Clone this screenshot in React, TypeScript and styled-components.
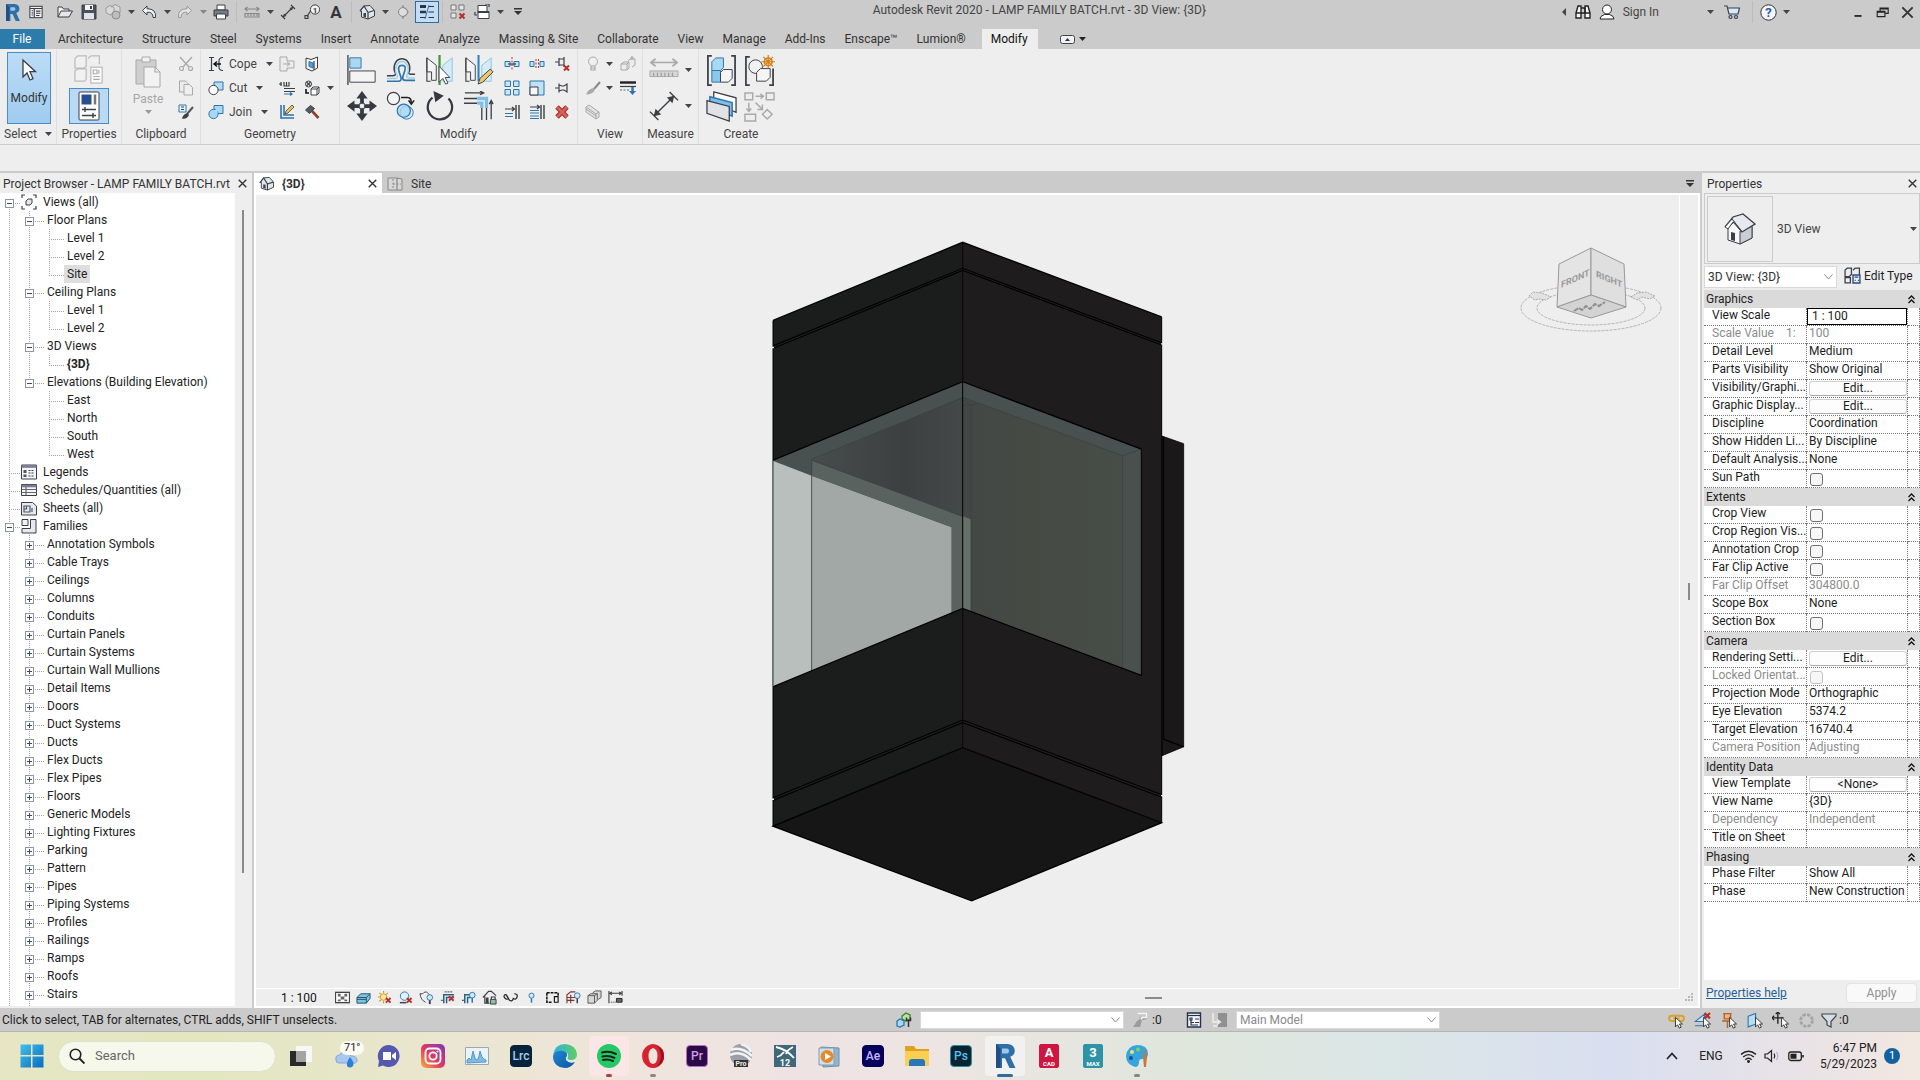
import React, { ReactNode } from 'react';
import styled, { createGlobalStyle, css } from 'styled-components';

const ink = '#3b3f46';
const chrome = '#cbcbcb';
const face = '#eeeeee';
const sky = '#a8d8f2';
const blue = '#2f74ad';
const mute = '#a9a9a9';
const red = '#b5302a';

const Global = createGlobalStyle`
  * { box-sizing: border-box; }
  html, body { margin: 0; height: 100%; }
  body { font: 12px/16px Roboto, "Open Sans", sans-serif; color: #222; background: ${face}; overflow: hidden; }
  button, select, input { font: inherit; color: inherit; margin: 0; padding: 0; border: 0; background: none; border-radius: 0; }
  h2 { margin: 0; font: inherit; }
  svg { display: block; flex: none; }
`;

/* ---------- icons ---------- */

const Mark = styled.text<{ $px: number; $c?: string }>`
  font: 700 ${p => p.$px}px Roboto, sans-serif;
  fill: ${p => p.$c ?? ink};
  text-anchor: middle;
`;

const s = (c = ink, w = 1.2) => ({ fill: 'none', stroke: c, strokeWidth: w });
const Cross = ({ x, y }: { x: number; y: number }) => (
  <path d={`M${x} ${y}l5 5m0-5l-5 5`} stroke={red} strokeWidth={2} fill="none" />
);
const Pointer = ({ x, y }: { x: number; y: number }) => (
  <path d={`M${x} ${y}v9l2-2 1.6 3.2 1.8-.9-1.6-3h2.8z`} fill="#fff" stroke="#222" strokeWidth={0.8} />
);

/* sixteen unit grid */
const small: Record<string, ReactNode> = {
  revit: <><path d="M2 0h8q4.500 .6 4.500 4.500 0 3-3 4l3.500 7.500h-4L8 9.500H6V16H2z" fill="#2f6fa8" /><path d="M6 3h3.500q1.200.2 1.200 1.600T9.500 6.300H6z" fill="#9fc6e4" /><path d="M2 0l3 3v13H2z" fill="#1f4f82" /></>,
  home: <><rect x="1" y="1.500" width="14" height="13" fill="#f2f2f2" stroke={ink} strokeWidth="1.200" /><path d="M1 4h14M6 4v10" {...s(ink, 1.4)} /><path d="M3 6.500h1.500M3 9h1.500M3 11.500h1.500M8 7h5M8 9.500h5M8 12h4" {...s()} /></>,
  open: <><path d="M1 13V3h4l1.500 2H12v2" fill="#f4f4f4" stroke={ink} /><path d="M1 13L4 7h11.500L12 13z" fill="#e4e8ec" stroke={ink} /></>,
  save: <><path d="M1 1h14v14H1z" fill="#4b515a" stroke={ink} /><path d="M4 1h8v5H4z" fill="#f3f3f3" /><path d="M3 9h10v6H3z" fill="#dfe3e8" /><path d="M9 2h2v3H9z" fill={ink} /></>,
  sync: <><path d="M1 4l4-2.500 4 2v5L5 11 1 8.500zM6 3l4-2.500L15 3v6l-5 3" fill="#d9d9d9" stroke="#9a9a9a" /><circle cx="11" cy="11" r="4" fill="#bdbdbd" stroke="#8c8c8c" /></>,
  undo: <path d="M6 2L1.500 6.500 6 11V8.300q6-.8 6 5.200h2.500Q15.500 4.800 6 4.700z" fill="#f3f3f3" stroke={ink} />,
  redo: <path d="M10 2l4.500 4.500L10 11V8.300q-6-.8-6 5.200H1.500Q.5 4.800 10 4.700z" fill="#e3e3e3" stroke="#999" />,
  print: <><path d="M4 1h8v5H4z" fill="#fff" stroke={ink} /><path d="M1 6h14v6H1z" fill="#777d86" stroke={ink} /><path d="M3.500 10h9v5h-9z" fill="#fff" stroke={ink} /></>,
  measureGray: <><path d="M1 5h14M3.500 3L1 5l2.500 2M12.500 3L15 5l-2.500 2" {...s('#888')} /><path d="M1 9.500h14v3.500H1zM4 10v2M7 10v2M10 10v2M13 10v2" {...s('#888')} /></>,
  dimension: <><path d="M3 13L13 3M1 11l4 4M11 1l4 4" {...s()} /><path d="M3 13l1-3.500L6.500 12zM13 3l-1 3.500L9.500 4z" fill={ink} /></>,
  tag: <><circle cx="11" cy="5.500" r="4.600" fill="#f4f4f4" stroke={ink} /><Mark x="11" y="8.500" $px={8}>1</Mark><path d="M6.500 7L3 12.500M1 11.500h3v3H1z" {...s()} /></>,
  letter: <Mark x="8" y="14" $px={17} $c="#33363c">A</Mark>,
  house: <><path d="M1 7l4-5 6-.5 4.500 5V12L9 15l-6.500-2V7z" fill="#dfe6ec" stroke={ink} /><path d="M1 7l4-5 4 6.500V15M9 8.500l6-2" {...s()} /><path d="M4.500 9h2.500v4.500l-2.500-.8z" fill={ink} /></>,
  section: <><circle cx="8" cy="8" r="4.500" fill="#ddd" stroke="#888" /><path d="M8 1v2.500M8 12.500V15" {...s('#888')} /><path d="M8 3.500A4.500 4.500 0 0 1 8 12.500L14 8z" fill="#8a8a8a" /></>,
  thin: <><path d="M1 2.500h6" {...s('#2d3340', 3)} /><path d="M1 8h6" {...s('#2d3340', 2.500)} /><path d="M1 13.500h6M9.500 2.500H15M9.500 8H15M9.500 13.500H15" {...s('#2d3340', 1.200)} /><path d="M6 15L10 1" {...s(blue, 1)} /></>,
  closeHidden: <><path d="M1 1h5v5H1zM9 1h5v5H9zM1 9h5v5H1z" fill="#e6e6e6" stroke="#777" /><Cross x={9.500} y={9.500} /></>,
  switchWin: <><path d="M4 1.500h9v7H4z" fill="#fff" stroke={ink} /><path d="M4 7.500h11v7H4z" fill="#fff" stroke={ink} /><path d="M4 8.500h11M1 8v3h2M11 0h4v3" {...s()} /></>,
  binoculars: <><path d="M1 9l2-7h3v12H1zM15 9l-2-7h-3v12h5z" fill="#f7f7f7" stroke="#222" strokeWidth="1.400" /><path d="M6 4h4v5H6M1 9h5M10 9h5" {...s('#222', 1.400)} /></>,
  user: <><circle cx="8" cy="5.500" r="4.500" fill="#fff" stroke="#222" /><path d="M1 15q0-3 4.500-4.500h5Q15 12 15 15z" fill="#fff" stroke="#222" /></>,
  cart: <><path d="M0 2h3l2 8h9l1.500-6H4" fill="#dbe8f5" stroke="#33415a" strokeWidth="1.200" /><circle cx="6.500" cy="13" r="1.500" {...s('#33415a')} /><circle cx="12" cy="13" r="1.500" {...s('#33415a')} /></>,
  close: <path d="M2.500 2.500l11 11m0-11l-11 11" {...s('#333', 2)} />,
  min: <path d="M4 12.500h8" {...s('#222', 2)} />,
  restore: <path d="M5 6V2.500h10V9h-4M1.500 6.500h9.500v6.500H1.500zM1.500 7.500H11M5 3.500h10" {...s('#222', 1.400)} />,
  cutFull: <><path d="M2 1l9 10M14 1L5 11" {...s(mute, 1.400)} /><circle cx="3.500" cy="12.500" r="2" {...s(mute)} /><circle cx="12.500" cy="12.500" r="2" {...s(mute)} /></>,
  copyDoc: <><path d="M1.500 1h6l3 3v8h-9z" fill="#ececec" stroke={mute} /><path d="M6 4.500h5.500l3 3V15H6z" fill="#efefef" stroke={mute} /></>,
  match: <><path d="M1 1h7v7H1z" fill="#eaf4fb" stroke={blue} /><path d="M3 3h3M3 5.500h3" {...s(ink)} /><path d="M15 3l-6 7" {...s('#555', 2)} /><path d="M9.500 9Q5 10 4 14.500q5 1 7-3.500z" fill={ink} /></>,
  cope: <><path d="M1 1.500h5M1 14.500h5M3.500 1.500v13" {...s()} /><path d="M15 1.500q-4 0-4 3.500v6q0 3.500 4 3.500" {...s()} /><path d="M6 8h7M9 5.500L6 8l3 2.500" {...s('#111', 1.400)} /></>,
  cutGeo: <><path d="M6 2h9v8H6z" fill="#b7dcf2" stroke={blue} /><circle cx="5.500" cy="10" r="4.600" fill="#fff" stroke={ink} /></>,
  join: <><path d="M6 1.500h9v8H6z" fill={sky} stroke={blue} /><circle cx="5.500" cy="10" r="4.600" fill={sky} stroke={blue} /><path d="M6.600 6h3v3.600h-3z" fill={sky} /></>,
  wallJoin: <path d="M1 1h7v4h7v7H8v3H1zM4 8h7M8 6l3 2-3 2" fill="#ececec" stroke={mute} />,
  splitFace: <><path d="M2 2l5 1.500L13.500 1v11L8 15l-6-2.500z" fill="#f4f4f4" stroke={ink} /><path d="M5 5.500l4 1.500v5l-4-1.500z" fill="#4ba3dc" stroke={blue} /><path d="M10 5v9" {...s()} /></>,
  beamJoin: <><path d="M0 4h3M2 2v4M5 2v4h5V2M7.500 2v4M5 8.500h11M5 11.500h11" {...s()} /><path d="M5 14h8M11 12.500l2 1.500-2 1.500" {...s(blue)} /></>,
  paintGeo: <><circle cx="4.500" cy="4" r="3" fill="#fff" stroke={ink} /><path d="M2.500 2l4 4M6.500 2l-4 4" {...s()} /><path d="M7 9l2-2h6v6l-2 2H7zM7 9h6v6M13 9l2-2" fill="#fff" stroke={ink} /><path d="M2 9v4h3" {...s('#111', 1.600)} /></>,
  wallEdit: <><path d="M2 1v13h13M5 1v10h10" {...s(blue, 1.600)} /><path d="M6 10l1-3 6-6 2 2-6 6z" fill="#f1c258" stroke={ink} strokeWidth=".8" /></>,
  hammer: <><path d="M1.500 6L6.500 1.500l4 3-5 5z" fill="#555b64" stroke={ink} /><path d="M8 7l6.500 7" {...s('#8b3f2c', 2.600)} /></>,
  split: <><path d="M1 5.500h5v5H1zM10 5.500h5v5h-5z" fill="#bfe2f5" stroke={blue} /><path d="M8 1v14" stroke={red} strokeDasharray="2 1.500" /><path d="M4 8h8" {...s()} /></>,
  splitGap: <><path d="M1 5.500h4v5H1zM11 5.500h4v5h-4z" fill="#bfe2f5" stroke={blue} /><path d="M7 3v10M9.500 3v10" stroke={red} strokeDasharray="2 1.500" /></>,
  unpin: <><path d="M1 6h4M5 2v8M5 3h5M5 9h5M10 1v10" {...s()} /><Cross x={10} y={9.500} /></>,
  array: <path d="M1 1h5.500v5.500H1zM9.500 1H15v5.500H9.500zM1 9.500h5.500V15H1zM9.500 9.500H15V15H9.500z" fill="#c8e6f6" stroke={blue} />,
  scale: <><path d="M1 1h14v14H1z" fill="#bfe2f5" stroke={blue} /><path d="M1 7h8v8H1z" fill="#f6f6f6" stroke={ink} /></>,
  pin: <path d="M1 8h4M5 3.500v9M5 5l3 1h2l3-2v8l-3-2H8l-3 1" {...s()} />,
  trimOne: <><path d="M1 5h9M8 3l2.500 2L8 7" {...s()} /><path d="M1 9.500h8M1 12.500h8" {...s(blue)} /><path d="M12 1v14M15 1v14" {...s(ink, 1.400)} /></>,
  trimMany: <><path d="M1 3h9M8 1l2.500 2L8 5" {...s()} /><path d="M1 6.500h9M1 9h9M1 12h9M1 14.500h9" {...s(blue)} /><path d="M12 1v14M15 1v14" {...s(ink, 1.400)} /></>,
  remove: <><path d="M3 3l10 10M13 3L3 13" {...s('#8e2a26', 4.800)} /><path d="M3 3l10 10M13 3L3 13" {...s('#dd5f58', 3)} /></>,
  bulb: <><circle cx="8" cy="5.500" r="4.500" fill="#efefef" stroke={mute} /><path d="M6 10v4h4v-4M6 12h4" {...s(mute)} /></>,
  displace: <><path d="M1 8l3-2h5v6l-2 2H1zM1 8h6v6M7 8l2-2M8 5l2-2h5v6l-3 2" fill="#ececec" stroke={mute} /><path d="M12 0v4M10 2h4" {...s(mute)} /></>,
  brush: <><path d="M15 2L9 9" {...s('#888', 2)} /><path d="M8.500 8Q3 9 1 14.500q7 0 9-5z" fill="#aaa" /></>,
  linework: <><path d="M0 2.500h16" {...s('#222', 2.400)} /><path d="M0 6.500h16" {...s()} /><path d="M0 10h10" stroke={blue} strokeDasharray="2 1.500" /><path d="M12.500 7v5" {...s(blue, 2.400)} /><path d="M9 11h7l-3.500 4z" fill={blue} /></>,
  beam: <path d="M1 3l3-2 10 7v5l-3 2L1 8zM1 3l10 7v5M11 10l3-2M1 5l10 7" fill="#e3e3e3" stroke={mute} />,
  viewsAll: <><path d="M1 4V1h3M12 1h3v3M15 12v3h-3M4 15H1v-3" {...s()} /><path d="M5 7l2-2h4v4L9 11H5z" fill="#e1e6ee" stroke={ink} /></>,
  legend: <><path d="M.5 1h15v14H.5z" fill="#f4f5f8" stroke={ink} /><path d="M.5 2.500h15" {...s('#777e92', 2.600)} /><path d="M2.500 6h3v3h-3zM2.500 10.500h3v2.500h-3z" fill="#555" /><path d="M7.500 6.500h6M7.500 9h6M7.500 12h6" stroke={ink} strokeDasharray="2 1" /></>,
  schedule: <><path d="M.5 2.500h15v11H.5z" fill="#f4f5f8" stroke={ink} /><path d="M.5 4h15" {...s('#777e92', 2.600)} /><path d="M.5 7.500h15M.5 10.500h15M5 5v8.500" {...s('#666')} /></>,
  sheet: <><path d="M.5 2.500h11l4 3.500v9H.5z" fill="#e6e9f0" stroke={ink} /><path d="M3 6h6v6H3zM5.500 6v3H3M11 8v4" {...s('#556')} /></>,
  family: <><path d="M1 1.500h6v6H1z" fill="#f2f3f7" stroke={ink} /><path d="M9.500 1.500H15V15H1v-4.500h8.500z" fill="#e6e9f0" stroke={ink} /></>,
  plan: <><path d="M1 2h9l5 1v11H1z" fill="#d8d8d8" stroke="#888" /><path d="M10 2v12" {...s('#888')} /><path d="M6 3v10M6 8h8" stroke="#888" strokeDasharray="2 1.500" /></>,
  binocOff: <><path d="M6 1h9v6l-5 1-2 7H1l4-6 3-2z" fill="#9c9c9c" /><path d="M5.500 1.500h9v4h-4l-1.500 2" fill="#c8c8c8" stroke="#f4f4f4" strokeWidth="1.300" /></>,
  worksets: <><path d="M6 4l4-3 4 2v4l-4 2-4-2z" fill="#b9e29f" stroke="#3d7c34" strokeWidth="1.300" /><path d="M1 9l3-2 4 2v4l-4 2-3-1z" fill={sky} stroke={blue} strokeWidth="1.300" /><path d="M12.500 8v7M10.500 5.500v3h4v-3" {...s('#333', 1.500)} /></>,
  options: <><path d="M1.500 1h13v14h-13z" fill="#f6f8fb" stroke="#26324a" strokeWidth="1.400" /><path d="M1.500 3.500h13" {...s('#26324a')} /><path d="M4 6h2v2H4zM9 7h4M9 10.500h4M5 8v5h7M5 10.500h3" {...s('#26324a')} /></>,
  optAdd: <><path d="M6 1h9v14H6z" fill="#909090" /><path d="M1 1v9h6M5 7.500L8.500 10 5 12.500M1 14h4" {...s('#f0f0f0', 1.400)} /></>,
  table: <><rect x=".5" y="2.500" width="15" height="11" fill="#fff" stroke="#444" strokeWidth="1.400" /><path d="M3 4h3v3H3zM10 4h3v3h-3zM6 7h4v3H6zM3 10h3v2H3zM10 10h3v2h-3z" fill="#666" /></>,
  visual: <path d="M1 8l4-4h10v5l-4 5H1zM1 8h10v6M11 8l4-4M1 10h10" fill="#7fc4de" stroke="#22506b" />,
  sun: <><circle cx="7" cy="7.500" r="3.500" fill="#fbe69b" stroke="#c8951f" /><path d="M7 1v2M7 12v2M1 7.500h2M2.500 3l1.500 1.500M11.500 3L10 4.500M2.500 12L4 10.500" {...s('#c8951f')} /><Cross x={9.500} y={8.500} /></>,
  shadow: <><circle cx="7" cy="6.500" r="4.500" fill="#dff1fa" stroke={blue} /><path d="M2 13.500h7" {...s('#444', 1.600)} /><Cross x={9.500} y={8.500} /></>,
  render: <><path d="M1 4h3q1-2 4-2l3 3M1 4q1 7 6 9" fill="#f4f4f4" stroke={ink} /><circle cx="11.500" cy="8" r="3" fill="#cfeaf8" stroke={blue} /><path d="M11.500 11v4" {...s(ink, 2)} /></>,
  cropX: <><path d="M4 14V5h11M7 14V8h8" {...s('#2a6384', 1.600)} /><path d="M1 11h2M5 2h9" stroke="#333" strokeDasharray="2 1" /><Cross x={9.500} y={6.500} /></>,
  crop: <><path d="M4 14V5h7M7 14V8h4" {...s('#2a6384', 1.600)} /><path d="M1 11h2" {...s()} /><circle cx="12" cy="5.500" r="3" fill="#cfeaf8" stroke={blue} /><path d="M12 8.500v5" {...s(blue, 1.600)} /></>,
  lock3d: <><path d="M1 8l6-6.500h3L15 6M3 7v7h5" {...s()} /><path d="M4 8h3v6H4z" fill={ink} /><path d="M9 10h6v5H9z" fill="#8cc1a2" stroke={ink} /><path d="M10 10V7.500h4V10" {...s()} /></>,
  glasses: <path d="M1 6q2-2 3 0t3 5q3 2 4-2 3 2 4-1.500T12 4M1 6q0 3 4 4" {...s('#222', 1.300)} />,
  bulbSmall: <><circle cx="8" cy="6" r="2.700" fill="#cfeaf8" stroke={blue} /><path d="M8 9v4.500" {...s(blue, 1.600)} /></>,
  reveal: <><path d="M2 3h12v3M2 3v10h6" stroke="#111" strokeWidth="1.600" strokeDasharray="3 1" fill="none" /><path d="M10 7h4v6h-4z" {...s('#111')} /></>,
  analytic: <><path d="M1 14V5l4-3h5M5 14V5M1 8h9M1 11h8" {...s('#7a3636')} /><circle cx="12" cy="6" r="3" fill="#cfeaf8" stroke={blue} /><path d="M12 9v5" {...s(ink, 1.600)} /></>,
  highlight: <path d="M1 6l3-2h7v7l-3 3H1zM1 6h7v8M8 6l3-2M6 3l3-2h6v7l-3 2" fill="#d8d8d8" stroke="#555" />,
  constraint: <><path d="M1 1v13M15 1v5M2 3.500h12M4 2L2 3.500 4 5M12 2l2 1.500L12 5" {...s()} /><path d="M3 13h6" stroke="#333" strokeDasharray="1 1" /><path d="M9 9h6v4H9z" fill="#666" stroke="#222" /></>,
  typeEdit: <><path d="M1 3l2-2h4v6l-2 2H1zM8.500 3l2-2h4v6M1 10h5v5H1z" {...s()} /><path d="M8.500 7.500h6.500V15H8.500z" fill="#e8f2fb" stroke="#2b4a80" strokeWidth="1.300" /><path d="M10 9.500h3.500M10 12.500h1M13 12.500h1" {...s('#2b4a80')} /></>,
  selLink: <><path d="M1 6q0-2.500 3-2.500h8q3 0 3 2.500t-3 2.500H4Q1 8.500 1 6zM5 6h6" {...s('#d8a32b', 1.800)} /><Pointer x={7} y={5} /></>,
  selUnder: <><path d="M1 9l9-7v7zM1 13h9" fill="#cfe7f6" stroke={blue} /><Cross x={10} y={1} /><Pointer x={9} y={5} /></>,
  selPin: <><path d="M3 1.500h8M4 1.500v5h6v-5M2 8.500h10M7 9v6" fill="#f0b583" stroke="#b5622b" strokeWidth="1.300" /><Pointer x={9} y={5} /></>,
  selFace: <><path d="M2 4l7-2.500v10L2 14z" fill="#b5def6" stroke={blue} /><Pointer x={9} y={5} /></>,
  drag: <><path d="M5.500 0v11M0 5.500h11" {...s('#222', 1.300)} /><path d="M3.500 2l2-2 2 2M2 3.500l-2 2 2 2" {...s('#222')} /><Pointer x={9} y={5} /></>,
  busy: <circle cx="8" cy="8" r="5.500" fill="none" stroke="#a3a3a3" strokeWidth="2.600" strokeDasharray="3 1.300" />,
  filter: <path d="M1 2h14v2L10 9.500V15l-4-2V9.500L1 4z" fill="#d7dde4" stroke="#3d4650" strokeWidth="1.200" />,
  lens: <><circle cx="6.500" cy="6.500" r="5.300" {...s('#222', 1.600)} /><path d="M10.500 10.500l5 5" {...s('#222', 1.900)} /></>,
  up: <path d="M3 11l5-5.500 5 5.500" {...s('#222', 1.700)} />,
  wifi: <><path d="M1 6q7-6 14 0M3 8.500q5-4.500 10 0M5 11q3-2.600 6 0" {...s('#222', 1.300)} /><circle cx="8" cy="12.800" r="1.400" fill="#222" /></>,
  volume: <><path d="M1 6v4h2.500L7.500 13.500v-11L3.500 6z" {...s('#222')} /><path d="M10 5.500q1.500 2.500 0 5" {...s('#222')} /><path d="M12.500 4q2.500 4 0 8" {...s('#b5b5bd')} /></>,
  battery: <><rect x=".8" y="4" width="12.500" height="8.500" rx="2" {...s('#222', 1.300)} /><rect x="2.500" y="5.700" width="6" height="5" fill="#222" /><path d="M15 7v2.500" {...s('#222', 1.600)} /></>,
};

/* thirty-two unit grid */
const large: Record<string, ReactNode> = {
  cursor: <path d="M10 6v17l4-4 3 7 3-1.300-3-7h5.500z" fill="#fff" stroke={ink} strokeWidth="1.300" />,
  typeProps: <><path d="M1 5l3-3h9v11l-2 2H1zM15 5l3-3h9v9M1 18l3-2h9v11l-2 2H1z" fill="#f1f1f1" stroke="#bbb" strokeWidth="1.300" /><rect x="18" y="14" width="12" height="17" fill="#fafafa" stroke="#aaa" /><path d="M20.500 17h4v4h-4zM26.500 17v4M20.500 24h7M20.500 27h7" {...s('#aaa')} /></>,
  propsPanel: <><rect x="6" y="2" width="20" height="28" rx="1" fill="#fff" stroke={ink} /><path d="M8.500 4.500h10v10h-10z" fill="#2a4f8f" /><path d="M22 4.500v10" {...s('#777', 2.500)} /><path d="M9 19.500h14M12 17v5M9 25.500h14M20 23v5" {...s(ink, 1.400)} /></>,
  paste: <><path d="M4 4h20v24H4z" fill="#cfcfcf" stroke={mute} /><path d="M10 1h8v5h-8z" fill="#f2f2f2" stroke={mute} /><path d="M12 11h11l5 5v15H12z" fill="#f2f2f2" stroke={mute} /><path d="M23 11v5h5" {...s(mute)} /></>,
  align: <><path d="M1 0v32" {...s('#222', 1.200)} /><path d="M3 3h12v11H3z" fill={sky} stroke={blue} /><path d="M3 17h27v12H3z" fill="#f4f4f4" stroke={ink} /></>,
  offset: <><path d="M1 22h6q4 0 3-3-2-3-1-8 2-7 8-7t8 7q1 5-1 8 0 1.500 2 1.500h5" fill="none" stroke={ink} strokeWidth="1.600" /><path d="M1 28h12q4 0 3-4l-2-6q-2-7 3-7t3 6l-2 6q-1 4 3 4h10" fill="none" stroke={blue} strokeWidth="1.800" /><path d="M1 25h9q3 0 2-3-3-5-1-10 2-5 6-5t6 5q2 5-1 10 0 2.500 3 2.500h6" fill="none" stroke="#9fd0ee" strokeWidth="1.500" /></>,
  mirrorPick: <><path d="M2 3l10 8v16H7v-9H2z" fill="#f4f4f4" stroke={ink} /><path d="M2 3v25h4" {...s()} /><path d="M29 3l-10 8v17h10z" fill="#d3ecf8" stroke="#8cc3e2" /><path d="M15.500 0v32" {...s('#3e9a35', 2.400)} /><path d="M15 12v17l4-4 3 6 2.500-1-3-6h5z" fill="#fff" stroke={ink} /></>,
  mirrorDraw: <><path d="M2 3l10 8v16H7v-9H2z" fill="#f4f4f4" stroke={ink} /><path d="M2 3v25h4" {...s()} /><path d="M29 3l-10 8v17h10z" fill="#d3ecf8" stroke="#8cc3e2" /><path d="M15.500 0v28" {...s('#2d83c4', 2.200)} /><path d="M15 31l2-6 11-10 3 3-11 11z" fill="#efc668" stroke={ink} /></>,
  move: <><path d="M16 5v8M16 19v8M5 16h8M19 16h8" {...s('#353a42', 4)} /><path d="M16 0l6 8H10zM16 32l6-8H10zM0 16l8-6v12zM32 16l-8-6v12z" fill="#353a42" /><rect x="13.500" y="13.500" width="5" height="5" fill="#fff" stroke={ink} /></>,
  copy: <><circle cx="8" cy="8" r="6.500" fill="#f4f4f4" stroke={ink} strokeWidth="1.300" /><path d="M16 7h7q4 0 4 6M24 10l3 4 3-4" {...s('#222', 1.700)} /><circle cx="22" cy="23" r="7" fill="#d5edf9" stroke={blue} /><circle cx="19" cy="21" r="7" fill={sky} fillOpacity=".8" stroke={blue} strokeWidth="1.300" /></>,
  rotate: <><path d="M8 7A13 13 0 1 0 25 8" {...s('#353a42', 2.400)} /><path d="M9 0l11 5-9 7z" fill="#353a42" /></>,
  trim: <><path d="M1 2h19M17 0l4 2-4 2" {...s(ink, 1.400)} /><path d="M0 8h14M0 13h14" {...s(ink, 1.500)} /><path d="M14 8h10v10M14 13h5v5" fill="none" stroke="#7fbfe6" strokeWidth="3.500" /><path d="M19 18v13M24 18v13M29 30V10M27 14l2-4 2 4" {...s(ink, 1.400)} /></>,
  measureBig: <><path d="M2 8h28M7 4L2 8l5 4M25 4l5 4-5 4" {...s(mute, 1.800)} /><path d="M1 17h30v6H1z" fill="#d5d5d5" stroke={mute} /><path d="M5 19v4M9 19v4M13 19v4M17 19v4M21 19v4M25 19v4" {...s('#999')} /></>,
  dimBig: <><path d="M5 27L27 5M1 22l9 9M22 1l9 9" {...s(ink, 1.500)} /><path d="M5 27l2-8 6 6zM27 5l-2 8-6-6z" fill={ink} /></>,
  group: <><path d="M6 1H2v30h4M26 1h4v30h-4" {...s(ink, 1.800)} /><path d="M6 7l4-4h8v10l-3 3H6z" fill={sky} stroke={blue} /><path d="M6 16h9v12H6z" fill="#8ac8ea" stroke={blue} /><path d="M15 18l3-3h9v9l-4 4h-8z" fill="#f5f5f5" stroke={ink} /></>,
  similar: <><path d="M6 2H2v29h4M26 31h4V14" {...s(ink, 1.800)} /><circle cx="12" cy="12" r="7" fill="#f1f1f1" stroke={ink} /><path d="M13 18l4-4h10v9l-4 4H13z" fill="#f5f5f5" stroke={ink} /><circle cx="25" cy="7" r="4" fill="#ffdf9a" stroke="#d27f1d" strokeWidth="1.600" /><path d="M25 0v14M18 7h14M20 2l10 10M30 2L20 12" {...s('#d27f1d')} /></>,
  parts: <><path d="M8 1l23 6v15L8 12z" fill="#fff" stroke={ink} strokeWidth="1.300" /><path d="M4 6l23 6v14L4 16z" fill="#7cbfe8" stroke={blue} strokeWidth="1.500" /><path d="M1 10l23 6v15L1 23z" fill="#dfe3e7" stroke={ink} strokeWidth="1.300" /></>,
  assembly: <g fill="none" stroke="#a9a9a9" strokeWidth="1.500"><path d="M1 2h8v7H1zM23 2h8v7h-8zM1 24h11v7H1zM24 19l5 5-5 5-5-5zM12 5.500h8M17 3l3 2.500L17 8M5 12v9M2.500 18L5 21l2.500-3M12 12l7 7M19 14v5h-5" /></g>,
  bigHouse: <><path d="M4 15v12l12 4 12-6V14L14 5z" fill="#f7f7f9" stroke={ink} /><path d="M16 18v13l12-6V13z" fill="#c9cdd6" stroke={ink} /><path d="M1 14L9 4l10-3 12 10-13 8L8 6.500z" fill="#e7e9f0" stroke={ink} strokeWidth="1.300" /><path d="M8 6L1 14l3 2 5-7 9 10z" fill="#fff" stroke={ink} /><path d="M7 19l4 1v8l-4-1z" fill={ink} /></>,
};

const Ico = ({ n, px = 16 }: { n: string; px?: number }) =>
  large[n] ? (
    <svg width={px} height={px} viewBox="0 0 32 32" aria-hidden="true">{large[n]}</svg>
  ) : (
    <svg width={px} height={px} viewBox="0 0 16 16" aria-hidden="true">{small[n]}</svg>
  );

const Caret = ({ c = '#444' }: { c?: string }) => (
  <svg width="7" height="4" viewBox="0 0 7 4" aria-hidden="true"><path d="M0 0h7L3.500 4z" fill={c} /></svg>
);
const Customize = () => (
  <svg width="8" height="8" viewBox="0 0 8 8" aria-hidden="true"><path d="M0 0h8v1.500H0zM0 3h8L4 7z" fill="#333" /></svg>
);

/* ---------- window frame ---------- */

const Window = styled.div`
  height: 100vh;
  display: flex;
  flex-direction: column;
  background: ${face};
`;
const Bar = styled.header`
  flex: none;
  height: 29px;
  display: flex;
  background: ${chrome};
`;
const Tools = styled.div`
  display: flex;
  align-items: center;
  height: 24px;
`;
const Tool = styled.button<{ $w?: number; $on?: boolean }>`
  width: ${p => p.$w ?? 24}px;
  height: 22px;
  display: grid;
  place-items: center;
  flex: none;
  ${p => p.$on && css`background: #c3ddf5; box-shadow: inset 0 0 0 1px #2f6ca6;`}
`;
const Divider = styled.span`
  width: 1px;
  height: 22px;
  margin: 0 3px;
  background: #bcbcbc;
`;
const Spacer = styled.span<{ $w: number }>`
  width: ${p => p.$w}px;
  flex: none;
`;
const Title = styled.h1`
  flex: 1;
  margin: 0;
  padding-right: 8px;
  font: inherit;
  line-height: 20px;
  text-align: center;
  color: #444;
`;
const SignIn = styled.button`
  padding: 0 45px 0 4px;
  color: #444;
`;

const Quick = () => (
  <Tools>
    <Tool aria-label="Revit"><Ico n="revit" px={17} /></Tool>
    <Tool aria-label="Home"><Ico n="home" px={14} /></Tool>
    <Spacer $w={5} />
    <Tool aria-label="Open"><Ico n="open" /></Tool>
    <Tool aria-label="Save"><Ico n="save" /></Tool>
    <Tool aria-label="Synchronize"><Ico n="sync" /></Tool>
    <Tool $w={12} aria-label="Synchronize options"><Caret /></Tool>
    <Tool aria-label="Undo"><Ico n="undo" /></Tool>
    <Tool $w={12} aria-label="Undo list"><Caret /></Tool>
    <Tool aria-label="Redo"><Ico n="redo" /></Tool>
    <Tool $w={12} aria-label="Redo list"><Caret c="#888" /></Tool>
    <Tool aria-label="Print"><Ico n="print" /></Tool>
    <Divider />
    <Tool aria-label="Measure"><Ico n="measureGray" /></Tool>
    <Tool $w={12} aria-label="Measure options"><Caret /></Tool>
    <Tool aria-label="Aligned dimension"><Ico n="dimension" /></Tool>
    <Tool aria-label="Tag"><Ico n="tag" /></Tool>
    <Tool aria-label="Text"><Ico n="letter" /></Tool>
    <Divider />
    <Tool aria-label="Default 3D view"><Ico n="house" /></Tool>
    <Tool $w={12} aria-label="3D view options"><Caret /></Tool>
    <Tool aria-label="Section"><Ico n="section" /></Tool>
    <Tool $on aria-label="Thin lines"><Ico n="thin" /></Tool>
    <Divider />
    <Tool aria-label="Close inactive views"><Ico n="closeHidden" /></Tool>
    <Tool aria-label="Switch windows"><Ico n="switchWin" /></Tool>
    <Tool $w={12} aria-label="Window list"><Caret /></Tool>
    <Tool aria-label="Customize toolbar"><Customize /></Tool>
  </Tools>
);

const HelpMark = () => (
  <svg width="17" height="17" viewBox="0 0 17 17" aria-hidden="true">
    <circle cx="8.500" cy="8.500" r="7.700" fill="#f3f6fb" stroke="#333" />
    <Mark x="8.500" y="13" $px={13} $c="#2a5db0">?</Mark>
  </svg>
);

const Info = () => (
  <Tools>
    <Tool $w={14} aria-label="Collapse"><svg width="4" height="8" viewBox="0 0 4 8"><path d="M4 0v8L0 4z" fill="#444" /></svg></Tool>
    <Tool aria-label="Search"><Ico n="binoculars" /></Tool>
    <Tool aria-label="Account"><Ico n="user" /></Tool>
    <SignIn>Sign In</SignIn>
    <Tool $w={12} aria-label="Account menu"><Caret /></Tool>
    <Spacer $w={4} />
    <Tool aria-label="App store"><Ico n="cart" /></Tool>
    <Spacer $w={5} />
    <Divider />
    <Tool aria-label="Help"><HelpMark /></Tool>
    <Tool $w={12} aria-label="Help menu"><Caret /></Tool>
    <Spacer $w={54} />
    <Tool aria-label="Minimize"><Ico n="min" px={14} /></Tool>
    <Tool aria-label="Restore"><Ico n="restore" px={13} /></Tool>
    <Tool $w={26} aria-label="Close"><Ico n="close" px={15} /></Tool>
  </Tools>
);

const TabRow = styled.nav`
  flex: none;
  height: 20px;
  display: flex;
  background: ${chrome};
`;
const Tab = styled.button<{ $kind?: 'file' | 'current' }>`
  padding: 0 10px 0 9px;
  line-height: 20px;
  color: #333;
  ${p => p.$kind === 'file' && css`width: 45px; margin-right: 4px; background: #2b7cab; color: #fff;`}
  ${p => p.$kind === 'current' && css`margin-left: 6px; background: ${face}; color: #111;`}
`;
const TabToggle = styled.button`
  display: flex;
  align-items: center;
  gap: 4px;
  margin-left: 22px;
`;
const tabs = ['Architecture', 'Structure', 'Steel', 'Systems', 'Insert', 'Annotate', 'Analyze', 'Massing & Site', 'Collaborate', 'View', 'Manage', 'Add-Ins', 'Enscape™', 'Lumion®'];

/* ---------- ribbon ---------- */

const Ribbon = styled.section`
  flex: none;
  height: 96px;
  display: flex;
  border-bottom: 1px solid ${chrome};
`;
const PanelBox = styled.section<{ $w: number }>`
  width: ${p => p.$w}px;
  display: flex;
  flex-direction: column;
  border-right: 1px solid #e0e0e0;
  &:last-child { border-right: 0; }
`;
const PanelBody = styled.div<{ $pad: number }>`
  height: 76px;
  padding: 3px 0 0 ${p => p.$pad}px;
  display: flex;
`;
const PanelName = styled.h2`
  display: flex;
  justify-content: center;
  align-items: center;
  gap: 8px;
  color: #444;
  line-height: 18px;
`;
const Stack = styled.div<{ $w: number }>`
  width: ${p => p.$w}px;
  display: grid;
  grid-auto-rows: 24px;
  align-content: start;
`;
const Cells = styled.div<{ $cols: number; $w: number; $h: number }>`
  display: grid;
  grid-template-columns: repeat(${p => p.$cols}, ${p => p.$w}px);
  grid-auto-rows: ${p => p.$h}px;
  align-content: start;
`;
const Cell = styled.button`
  display: grid;
  place-items: center;
`;
const NamedCell = styled.button`
  display: flex;
  align-items: center;
  gap: 5px;
  color: #444;
  & > :last-child { margin-left: 4px; }
`;
const ModifyButton = styled.button`
  width: 44px;
  height: 72px;
  display: flex;
  flex-direction: column;
  align-items: center;
  gap: 4px;
  padding-top: 2px;
  background: linear-gradient(#bcdcf6, #9fcbef);
  box-shadow: inset 0 0 0 1px #4d8cc0;
  color: #333;
`;
const PropsStack = styled.div`
  display: grid;
  grid-template-rows: 34px 36px;
  gap: 2px;
  width: 40px;
`;
const PropsButton = styled.button<{ $on?: boolean }>`
  display: grid;
  place-items: center;
  ${p => p.$on && css`background: #b9d9f4; box-shadow: inset 0 0 0 1px #4d8cc0;`}
`;
const PasteButton = styled.button`
  width: 44px;
  height: 66px;
  display: flex;
  flex-direction: column;
  align-items: center;
  gap: 3px;
  padding-top: 4px;
  color: #a6a6a6;
`;

const Panel = ({ name, w, pad, drop, children }: { name: string; w: number; pad: number; drop?: boolean; children: ReactNode }) => (
  <PanelBox $w={w}>
    <PanelBody $pad={pad}>{children}</PanelBody>
    <PanelName>{name}{drop && <Caret />}</PanelName>
  </PanelBox>
);
const Icons = ({ list, px = 16 }: { list: string[]; px?: number }) => (
  <>{list.map(n => <Cell key={n} aria-label={n}><Ico n={n} px={px} /></Cell>)}</>
);

const RibbonView = () => (
  <Ribbon>
    <Panel name="Select" w={57} pad={7} drop>
      <ModifyButton><Ico n="cursor" px={32} />Modify</ModifyButton>
    </Panel>
    <Panel name="Properties" w={65} pad={12}>
      <PropsStack>
        <PropsButton aria-label="Type properties"><Ico n="typeProps" px={30} /></PropsButton>
        <PropsButton $on aria-label="Properties"><Ico n="propsPanel" px={32} /></PropsButton>
      </PropsStack>
    </Panel>
    <Panel name="Clipboard" w={79} pad={4}>
      <PasteButton><Ico n="paste" px={32} />Paste<Caret c="#999" /></PasteButton>
      <Spacer $w={4} />
      <Stack $w={24}><Icons list={['cutFull', 'copyDoc', 'match']} /></Stack>
    </Panel>
    <Panel name="Geometry" w={139} pad={7}>
      <Stack $w={67}>
        <NamedCell><Ico n="cope" />Cope<Caret /></NamedCell>
        <NamedCell><Ico n="cutGeo" />Cut<Caret /></NamedCell>
        <NamedCell><Ico n="join" />Join<Caret /></NamedCell>
      </Stack>
      <Stack $w={24}><Icons list={['wallJoin', 'beamJoin', 'wallEdit']} /></Stack>
      <Stack $w={25}><Icons list={['splitFace', 'paintGeo', 'hammer']} /></Stack>
      <Stack $w={12}><span /><Cell aria-label="Paint options"><Caret /></Cell></Stack>
    </Panel>
    <Panel name="Modify" w={238} pad={2}>
      <Cells $cols={4} $w={39} $h={36}>
        <Icons px={30} list={['align', 'offset', 'mirrorPick', 'mirrorDraw', 'move', 'copy', 'rotate', 'trim']} />
      </Cells>
      <Spacer $w={1} />
      <Cells $cols={3} $w={25} $h={24}>
        <Icons list={['split', 'splitGap', 'unpin', 'array', 'scale', 'pin', 'trimOne', 'trimMany', 'remove']} />
      </Cells>
    </Panel>
    <Panel name="View" w={65} pad={4}>
      <Stack $w={21}><Icons list={['bulb', 'brush', 'beam']} /></Stack>
      <Stack $w={12}>
        <Cell aria-label="Hide options"><Caret /></Cell>
        <Cell aria-label="Override options"><Caret /></Cell>
      </Stack>
      <Stack $w={26}><Icons list={['displace', 'linework']} /></Stack>
    </Panel>
    <Panel name="Measure" w={56} pad={3}>
      <Cells $cols={1} $w={36} $h={36}><Icons px={30} list={['measureBig', 'dimBig']} /></Cells>
      <Cells $cols={1} $w={13} $h={36}>
        <Cell aria-label="Measure options"><Caret /></Cell>
        <Cell aria-label="Dimension options"><Caret /></Cell>
      </Cells>
    </Panel>
    <Panel name="Create" w={84} pad={3}>
      <Cells $cols={2} $w={38} $h={36}><Icons px={31} list={['group', 'similar', 'parts', 'assembly']} /></Cells>
    </Panel>
  </Ribbon>
);

const OptionsBar = styled.div`
  flex: none;
  height: 28px;
  border-bottom: 2px solid ${chrome};
`;

/* ---------- project browser ---------- */

const Workspace = styled.main`
  flex: 1;
  min-height: 0;
  display: flex;
`;
const Dock = styled.aside<{ $w: number }>`
  flex: none;
  width: ${p => p.$w}px;
  display: flex;
  flex-direction: column;
  min-height: 0;
  background: ${face};
`;
const DockHead = styled.div`
  flex: none;
  height: 20px;
  display: flex;
  align-items: center;
  justify-content: space-between;
  padding: 1px 2px 0 3px;
  color: #333;
  white-space: nowrap;
`;
const Browser = styled(Dock)`
  border-right: 2px solid ${chrome};
`;
const TreeArea = styled.div`
  flex: 1;
  min-height: 0;
  display: flex;
  margin-bottom: 2px;
`;
const Tree = styled.ul`
  flex: 1;
  margin: 0;
  padding: 0;
  list-style: none;
  background: #fff;
  overflow: hidden;
`;
const Track = styled.div`
  width: 17px;
  padding: 17px 8px 133px 7px;
  display: flex;
`;
const Thumb = styled.span`
  flex: 1;
  background: #8a8a8a;
`;
const Row = styled.li`
  height: 18px;
  display: flex;
  align-items: stretch;
  line-height: 18px;
  color: #222;
`;
type Guide = 'none' | 'pass' | 'tee' | 'end' | 'start' | 'run';
const dotsV = 'repeating-linear-gradient(to bottom, #a0a0a0 0 1px, transparent 1px 2px)';
const dotsH = 'repeating-linear-gradient(to right, #a0a0a0 0 1px, transparent 1px 2px)';
const guideArt: Record<Guide, string> = {
  none: 'none',
  pass: `${dotsV} 9px 0 / 1px 18px no-repeat`,
  tee: `${dotsV} 9px 0 / 1px 18px no-repeat, ${dotsH} 9px 10px / 15px 1px no-repeat`,
  end: `${dotsV} 9px 0 / 1px 10px no-repeat, ${dotsH} 9px 10px / 15px 1px no-repeat`,
  start: `${dotsV} 9px 10px / 1px 8px no-repeat, ${dotsH} 9px 10px / 15px 1px no-repeat`,
  run: `${dotsH} 9px 10px / 15px 1px no-repeat`,
};
const Line = styled.span<{ $g: Guide; $last?: boolean }>`
  flex: none;
  width: ${p => (p.$last ? 24 : 20)}px;
  padding: 6px 0 0 5px;
  background: ${p => guideArt[p.$g]};
`;
const Expander = styled.button`
  display: block;
  width: 9px;
  height: 9px;
  background: #fff;
  box-shadow: inset 0 0 0 1px #8f959e;
`;
const RowIcon = styled.span`
  width: 23px;
  padding: 1px 0 0 1px;
`;
const RowName = styled.button<{ $picked?: boolean; $bold?: boolean; $flush?: boolean }>`
  padding: 0 ${p => (p.$flush ? 0 : 3)}px;
  line-height: 17px;
  white-space: nowrap;
  background: ${p => (p.$picked ? '#dedede' : 'none')};
  font-weight: ${p => (p.$bold ? 700 : 400)};
`;
const Sign = ({ open }: { open: boolean }) => (
  <Expander aria-label={open ? 'Collapse' : 'Expand'}>
    <svg width="9" height="9" viewBox="0 0 9 9"><path d={open ? 'M2 4.500h5' : 'M2 4.500h5M4.500 2v5'} stroke="#3b4a70" /></svg>
  </Expander>
);

type Branch = { label: string; leaves: string[] };
const viewBranches: Branch[] = [
  { label: 'Floor Plans', leaves: ['Level 1', 'Level 2', 'Site'] },
  { label: 'Ceiling Plans', leaves: ['Level 1', 'Level 2'] },
  { label: '3D Views', leaves: ['{3D}'] },
  { label: 'Elevations (Building Elevation)', leaves: ['East', 'North', 'South', 'West'] },
];
const families = ['Annotation Symbols', 'Cable Trays', 'Ceilings', 'Columns', 'Conduits', 'Curtain Panels', 'Curtain Systems', 'Curtain Wall Mullions', 'Detail Items', 'Doors', 'Duct Systems', 'Ducts', 'Flex Ducts', 'Flex Pipes', 'Floors', 'Generic Models', 'Lighting Fixtures', 'Parking', 'Pattern', 'Pipes', 'Piping Systems', 'Profiles', 'Railings', 'Ramps', 'Roofs', 'Stairs'];

const Root = ({ label, icon, guide, open }: { label: string; icon: string; guide: Guide; open?: boolean }) => (
  <Row>
    <Line $g={guide}>{open && <Sign open />}</Line>
    <RowIcon><Ico n={icon} /></RowIcon>
    <RowName $flush>{label}</RowName>
  </Row>
);

const ProjectBrowser = () => (
  <Browser $w={254}>
    <DockHead>
      <h2>Project Browser - LAMP FAMILY BATCH.rvt</h2>
      <Tool $w={16} aria-label="Close browser"><Ico n="close" px={11} /></Tool>
    </DockHead>
    <TreeArea>
      <Tree>
        <Root label="Views (all)" icon="viewsAll" guide="start" open />
        {viewBranches.map((b, i) => {
          const last = i === viewBranches.length - 1;
          return (
            <React.Fragment key={b.label}>
              <Row>
                <Line $g="pass" />
                <Line $g={last ? 'end' : 'tee'} $last><Sign open /></Line>
                <RowName>{b.label}</RowName>
              </Row>
              {b.leaves.map((leaf, k) => (
                <Row key={leaf}>
                  <Line $g="pass" />
                  <Line $g={last ? 'none' : 'pass'} />
                  <Line $g={k === b.leaves.length - 1 ? 'end' : 'tee'} $last />
                  <RowName $picked={leaf === 'Site'} $bold={leaf === '{3D}'}>{leaf}</RowName>
                </Row>
              ))}
            </React.Fragment>
          );
        })}
        <Root label="Legends" icon="legend" guide="tee" />
        <Root label="Schedules/Quantities (all)" icon="schedule" guide="tee" />
        <Root label="Sheets (all)" icon="sheet" guide="tee" />
        <Root label="Families" icon="family" guide="tee" open />
        {families.map(f => (
          <Row key={f}>
            <Line $g="pass" />
            <Line $g="tee" $last><Sign open={false} /></Line>
            <RowName>{f}</RowName>
          </Row>
        ))}
        <Row aria-hidden="true"><Line $g="pass" /><Line $g="pass" /></Row>
      </Tree>
      <Track><Thumb /></Track>
    </TreeArea>
  </Browser>
);

/* ---------- drawing area ---------- */

const Center = styled.section`
  flex: 1;
  min-width: 0;
  display: flex;
  flex-direction: column;
  border-right: 2px solid ${chrome};
`;
const ViewTabs = styled.div`
  flex: none;
  height: 20px;
  display: flex;
  background: ${chrome};
`;
const ViewTab = styled.div<{ $on?: boolean }>`
  width: ${p => (p.$on ? 128 : 120)}px;
  display: flex;
  align-items: center;
  gap: 8px;
  padding: 1px 2px 0 5px;
  background: ${p => (p.$on ? '#fff' : 'none')};
  font-weight: ${p => (p.$on ? 700 : 400)};
  color: #333;
`;
const TabName = styled.button`
  flex: 1;
  text-align: left;
  font-weight: inherit;
`;
const Push = styled.span`
  flex: 1;
`;
const Frame = styled.div`
  flex: 1;
  min-height: 0;
  display: grid;
  grid-template: 1fr 17px / 1fr 18px;
  border: 2px solid #fff;
`;
const Canvas = styled.div`
  position: relative;
  display: flex;
  justify-content: center;
  align-items: flex-start;
  padding: 25px 0 0 24px;
  border-right: 1px solid #fff;
  border-bottom: 1px solid #fff;
  overflow: hidden;
`;
const CubeSpot = styled.div`
  position: absolute;
  top: 52px;
  right: 16px;
`;
const SideMark = styled.div`
  display: flex;
  justify-content: center;
  padding-top: 388px;
  &::after { content: ''; width: 2px; height: 17px; background: #8a8a8a; }
`;
const ControlBar = styled.div`
  display: flex;
  align-items: center;
  padding-left: 25px;
`;
const Scale = styled.button`
  width: 51px;
  text-align: left;
  color: #111;
`;
const BottomMark = styled.span`
  width: 17px;
  height: 2px;
  margin-right: 518px;
  background: #8a8a8a;
`;
const Grip = styled.div`
  display: grid;
  place-items: center;
`;
const controls = ['table', 'visual', 'sun', 'shadow', 'render', 'cropX', 'crop', 'lock3d', 'glasses', 'bulbSmall', 'reveal', 'analytic', 'highlight', 'constraint'];

const Lamp = () => (
  <svg width="480" height="700" viewBox="0 0 1440 1568" preserveAspectRatio="none" role="img" aria-label="Wall lamp model">
    <path d="M1266 484l65 17v679l-65 20z" fill="#1a1818" stroke="#000" strokeWidth="2" />
    <path d="M1271 486v677l60 17" fill="none" stroke="#000" strokeWidth="3" />
    <path d="M99 225L668 50v1132L99 1358z" fill="#1b1c1c" />
    <path d="M668 50l597 167v1133L668 1182z" fill="#1f1c1d" />
    <path d="M99 1358l569-176 597 168-570 175z" fill="#161616" stroke="#000" strokeWidth="3" />
    <path d="M99 225L668 50l597 167M99 225v1133M1265 217v1133" fill="none" stroke="#000" strokeWidth="3" />
    <path d="M99 282l569-174 597 167M99 288l569-175 597 167M99 1294l569-174 597 167M99 1300l569-174 597 167" fill="none" stroke="#000" strokeWidth="2.500" />
    <path d="M96 284h6v3h-6zM1263 276h6v3h-6zM96 1296h6v3h-6zM1263 1288h6v3h-6z" fill={face} />
    <path d="M100 538L668 362v508L100 1045z" fill="#485150" />
    <path d="M215 536l435-133 18-4v264L215 538z" fill="url(#leftGlass)" />
    <path d="M100 540l115 33v437l-115 35z" fill="#b9bfbd" />
    <path d="M215 573l420 115v192l-420 130z" fill="#a2a8a5" />
    <path d="M215 538l453 126v206l-33 10V688L215 573z" fill="#5a6260" />
    <path d="M215 538v472M215 538l453 126M215 536l435-133M650 403l18-3" fill="none" stroke="#39403f" strokeWidth="2" />
    <path d="M668 362l536 151v507L668 870z" fill="url(#rightGlass)" />
    <path d="M668 362l536 151-56 15-480-131z" fill="#485150" />
    <path d="M1148 528l56-15v507l-56-15z" fill="#4a504d" />
    <path d="M668 663l25 8v206l-25-7z" fill="#647069" />
    <path d="M650 403l18-6 480 131v477M1148 528l56-15M668 402l25 13v462M668 415h25l18-4" fill="none" stroke="#3b4240" strokeWidth="2" />
    <path d="M100 538L668 362l536 151v507L668 870 100 1045" fill="none" stroke="#000" strokeWidth="3" />
    <path d="M668 50v1132" stroke="#000" strokeWidth="3" />
    <path d="M99 540v504" stroke="#6e7472" strokeWidth="4" />
    <defs>
      <linearGradient id="leftGlass"><stop offset="0" stopColor="#464d4c" /><stop offset=".6" stopColor="#3d4040" /><stop offset="1" stopColor="#434948" /></linearGradient>
      <linearGradient id="rightGlass"><stop offset="0" stopColor="#434846" /><stop offset=".4" stopColor="#454a43" /><stop offset="1" stopColor="#474e48" /></linearGradient>
    </defs>
  </svg>
);

const CubeText = styled.text`
  font: 700 9px Roboto, sans-serif;
  fill: #9a9a9a;
`;
const ViewCube = () => (
  <svg width="144" height="86" viewBox="0 0 144 86" role="img" aria-label="View cube">
    <g fill="none" stroke="#b4b4b4" strokeDasharray="3 1">
      <ellipse cx="72" cy="61" rx="70" ry="23" />
      <ellipse cx="72" cy="61" rx="54" ry="17" />
    </g>
    <path d="M10 49l4-4 9 1 9 4-5 3-7-1-4 1zM112 50l6-4 9-1 9 4-5 3-8-2-5 3z" fill="#e2e2e2" stroke="#ababab" strokeDasharray="2 1" />
    <path d="M72 1L40 17l-2 43 34-12z" fill="#e4e4e4" stroke="#999" />
    <path d="M72 1l33 16 2 43-35-12z" fill="#dfdfdf" stroke="#999" />
    <path d="M38 60l34-12 35 12-35 11z" fill="#d3d3d3" stroke="#999" />
    <CubeText transform="translate(42 41) skewY(-24)">FRONT</CubeText>
    <path d="M55 64l5-3 3 2 4-4 4 3 5-5 4 2 6-4" fill="none" stroke="#8f8f8f" strokeWidth="2" strokeDasharray="5 1" />
    <CubeText transform="translate(77 30) skewY(22)">RIGHT</CubeText>
  </svg>
);

const DrawingArea = () => (
  <Center>
    <ViewTabs>
      <ViewTab $on>
        <Ico n="house" px={15} /><TabName>{'{3D}'}</TabName>
        <Tool $w={16} aria-label="Close view"><Ico n="close" px={11} /></Tool>
      </ViewTab>
      <ViewTab><Ico n="plan" /><TabName>Site</TabName></ViewTab>
      <Push />
      <Tool $w={20} aria-label="View list"><Customize /></Tool>
    </ViewTabs>
    <Frame>
      <Canvas>
        <Lamp />
        <CubeSpot><ViewCube /></CubeSpot>
      </Canvas>
      <SideMark />
      <ControlBar>
        <Scale>1 : 100</Scale>
        {controls.map(c => <Tool key={c} $w={21} aria-label={c}><Ico n={c} px={15} /></Tool>)}
        <Push />
        <BottomMark />
      </ControlBar>
      <Grip>
        <svg width="9" height="9" viewBox="0 0 9 9"><path d="M6 0h2v2H6zM3 3h2v2H3zM6 3h2v2H6zM0 6h2v2H0zM3 6h2v2H3zM6 6h2v2H6z" fill="#b8b8b8" /></svg>
      </Grip>
    </Frame>
  </Center>
);

/* ---------- properties ---------- */

const Props = styled(Dock)`
  padding-left: 2px;
`;
const TypeBox = styled.div`
  flex: none;
  height: 71px;
  display: flex;
  align-items: center;
  gap: 4px;
  padding: 2px;
  border: 1px solid ${chrome};
  color: #444;
`;
const Preview = styled.div`
  width: 66px;
  height: 66px;
  display: grid;
  place-items: center;
  border: 1px solid ${chrome};
`;
const Instance = styled.div`
  flex: none;
  height: 26px;
  display: flex;
  align-items: flex-start;
  padding-top: 2px;
  gap: 7px;
`;
const SelectWrap = styled.label<{ $w: number; $h: number }>`
  position: relative;
  width: ${p => p.$w}px;
  height: ${p => p.$h}px;
  & > svg { position: absolute; right: 4px; top: calc(50% - 3px); pointer-events: none; }
`;
const Select = styled.select<{ $quiet?: boolean }>`
  appearance: none;
  width: 100%;
  height: 100%;
  padding: 0 16px 0 3px;
  background: #fff;
  border: 1px solid #d8d8d8;
  color: ${p => (p.$quiet ? '#8a8a8a' : '#333')};
`;
const Chevron = () => (
  <svg width="9" height="6" viewBox="0 0 9 6"><path d="M.5 .5l4 4.500 4-4.500" fill="none" stroke="#888" /></svg>
);
const EditType = styled.button`
  display: flex;
  align-items: center;
  gap: 3px;
  padding-top: 1px;
  color: #222;
`;
const Sheet = styled.div`
  flex: 1;
  min-height: 0;
  background: #fff;
  overflow: hidden;
`;
const Grid = styled.table`
  width: 100%;
  table-layout: fixed;
  border-spacing: 0;
`;
const GroupHead = styled.th`
  height: 18px;
  padding: 0 5px 0 2px;
  line-height: 18px;
  background: #dadada;
  font-weight: 400;
  text-align: left;
  color: #222;
`;
const GroupLine = styled.span`
  display: flex;
  justify-content: space-between;
  align-items: center;
`;
const Name = styled.th<{ $off?: boolean }>`
  height: 18px;
  padding: 0 0 2px 8px;
  line-height: 15px;
  font-weight: 400;
  text-align: left;
  white-space: nowrap;
  color: ${p => (p.$off ? '#8c8c8c' : '#1c1c1c')};
  border-bottom: 1px dotted #777;
`;
const Value = styled.td<{ $off?: boolean; $control?: boolean }>`
  height: 18px;
  padding: 0 0 ${p => (p.$control ? 0 : 2)}px 2px;
  line-height: 15px;
  white-space: nowrap;
  color: ${p => (p.$off ? '#8c8c8c' : '#1c1c1c')};
  border: dotted #777;
  border-width: 0 1px 1px 1px;
`;
const Edge = styled.td`
  border: dotted #777;
  border-width: 0 1px 1px 0;
`;
const Box = styled.input`
  appearance: none;
  display: block;
  width: 13px;
  height: 13px;
  margin: 2px 0 0 1px;
  border: 1px solid #6e6e6e;
  border-radius: 3px;
  background: #f7f7f7;
  &:disabled { border-color: #c4c4c4; }
`;
const CellButton = styled.button`
  display: block;
  width: 98px;
  height: 15px;
  line-height: 13px;
  border: 1px solid #d0d0d0;
  border-bottom-color: #aaa;
  border-radius: 3px;
  background: #fdfdfd;
`;
const ScaleInput = styled.input`
  display: block;
  width: 100px;
  height: 17px;
  margin-left: -2px;
  padding: 0 4px 1px;
  border: 1px solid #000;
  background: #fff;
`;
const Footer = styled.div`
  flex: none;
  height: 28px;
  display: flex;
  align-items: center;
  justify-content: space-between;
  padding: 0 3px 2px 2px;
`;
const HelpLink = styled.a`
  color: #1f5f99;
  text-decoration: underline;
`;
const Apply = styled.button`
  width: 71px;
  height: 20px;
  border: 1px solid #e3e3e3;
  border-radius: 4px;
  background: #f9f9f9;
  color: #909090;
`;

type Prop = [name: string, value: string, off?: boolean];
const groups: { title: string; rows: Prop[] }[] = [
  { title: 'Graphics', rows: [['View Scale', '#input'], ['Scale Value    1:', '100', true], ['Detail Level', 'Medium'], ['Parts Visibility', 'Show Original'], ['Visibility/Graphi...', '!Edit...'], ['Graphic Display...', '!Edit...'], ['Discipline', 'Coordination'], ['Show Hidden Li...', 'By Discipline'], ['Default Analysis...', 'None'], ['Sun Path', '#check']] },
  { title: 'Extents', rows: [['Crop View', '#check'], ['Crop Region Vis...', '#check'], ['Annotation Crop', '#check'], ['Far Clip Active', '#check'], ['Far Clip Offset', '304800.0', true], ['Scope Box', 'None'], ['Section Box', '#check']] },
  { title: 'Camera', rows: [['Rendering Setti...', '!Edit...'], ['Locked Orientat...', '#check', true], ['Projection Mode', 'Orthographic'], ['Eye Elevation', '5374.2'], ['Target Elevation', '16740.4'], ['Camera Position', 'Adjusting', true]] },
  { title: 'Identity Data', rows: [['View Template', '!<None>'], ['View Name', '{3D}'], ['Dependency', 'Independent', true], ['Title on Sheet', '']] },
  { title: 'Phasing', rows: [['Phase Filter', 'Show All'], ['Phase', 'New Construction']] },
];
const Pre = styled.label`
  white-space: pre;
`;
const PropRow = ({ row: [name, value, off] }: { row: Prop }) => {
  const id = 'p-' + name.replace(/\W+/g, '');
  let content: ReactNode = value;
  if (value === '#check') content = <Box type="checkbox" id={id} disabled={off} />;
  else if (value === '#input') content = <ScaleInput id={id} defaultValue="1 : 100" />;
  else if (value[0] === '!') content = <CellButton id={id}>{value.slice(1)}</CellButton>;
  const bound = value[0] === '#' || value[0] === '!';
  return (
    <tr>
      <Name $off={off} scope="row"><Pre as={bound ? 'label' : 'span'} htmlFor={bound ? id : undefined}>{name}</Pre></Name>
      <Value $off={off} $control={bound}>{content}</Value>
      <Edge />
    </tr>
  );
};

const PropertiesPanel = () => (
  <Props $w={218}>
    <DockHead>
      <h2>Properties</h2>
      <Tool $w={12} aria-label="Close properties"><Ico n="close" px={11} /></Tool>
    </DockHead>
    <TypeBox>
      <Preview><Ico n="bigHouse" px={32} /></Preview>
      3D View
      <Push />
      <Caret />
    </TypeBox>
    <Instance>
      <SelectWrap $w={133} $h={22}>
        <Select aria-label="Element filter"><option>3D View: {'{3D}'}</option></Select>
        <Chevron />
      </SelectWrap>
      <EditType><Ico n="typeEdit" px={17} />Edit Type</EditType>
    </Instance>
    <Sheet>
      <Grid>
        <colgroup><col width="102" /><col width="102" /><col /></colgroup>
        {groups.map(g => (
          <tbody key={g.title}>
            <tr>
              <GroupHead colSpan={3} scope="rowgroup">
                <GroupLine>
                  {g.title}
                  <svg width="7" height="9" viewBox="0 0 7 9"><path d="M.5 4l3-3 3 3M.5 8l3-3 3 3" fill="none" stroke="#111" strokeWidth="1.300" /></svg>
                </GroupLine>
              </GroupHead>
            </tr>
            {g.rows.map(r => <PropRow key={r[0]} row={r} />)}
          </tbody>
        ))}
      </Grid>
    </Sheet>
    <Footer>
      <HelpLink href="#help">Properties help</HelpLink>
      <Apply>Apply</Apply>
    </Footer>
  </Props>
);

/* ---------- status bar ---------- */

const Status = styled.footer`
  flex: none;
  height: 24px;
  display: flex;
  align-items: center;
  padding: 1px 0 0 2px;
  background: ${chrome};
  border-bottom: 1px solid #b5b5b5;
  color: #222;
`;
const Hint = styled.span`
  width: 890px;
`;
const Count = styled.span<{ $w: number }>`
  width: ${p => p.$w}px;
`;

const StatusBar = () => (
  <Status>
    <Hint>Click to select, TAB for alternates, CTRL adds, SHIFT unselects.</Hint>
    <Tool aria-label="Worksets"><Ico n="worksets" /></Tool>
    <Spacer $w={4} />
    <SelectWrap $w={204} $h={18}>
      <Select aria-label="Active workset"><option></option></Select><Chevron />
    </SelectWrap>
    <Spacer $w={4} />
    <Tool aria-label="Editing requests"><Ico n="binocOff" /></Tool>
    <Count $w={30}>:0</Count>
    <Tool aria-label="Design options"><Ico n="options" /></Tool>
    <Spacer $w={2} />
    <Tool aria-label="Add to set"><Ico n="optAdd" /></Tool>
    <Spacer $w={4} />
    <SelectWrap $w={204} $h={18}>
      <Select $quiet aria-label="Design option"><option>Main Model</option></Select><Chevron />
    </SelectWrap>
    <Push />
    {['selLink', 'selUnder', 'selPin', 'selFace', 'drag', 'busy'].map(n => (
      <Tool key={n} $w={26} aria-label={n}><Ico n={n} px={17} /></Tool>
    ))}
    <Tool $w={20} aria-label="Filter"><Ico n="filter" /></Tool>
    <Count $w={81}>:0</Count>
  </Status>
);

/* ---------- desktop taskbar ---------- */

const Taskbar = styled.footer`
  flex: none;
  height: 48px;
  display: flex;
  align-items: center;
  padding-left: 10px;
  background: linear-gradient(to right, #e6e6c4, #e2e7bf 10%, #e8e6cb 20%, #efe5dc 32%, #eee3e3 42%, #ece5e2 50%, #dfe6dc 62%, #dbe6e6 72%, #d9dff0 84%, #e9e3e6 94%, #f2e8e1);
`;
const Launcher = styled.button<{ $tint?: string; $mark?: string; $long?: boolean }>`
  position: relative;
  width: 44px;
  height: 44px;
  display: grid;
  place-items: center;
  &::before {
    content: '';
    position: absolute;
    inset: 2px;
    border-radius: 4px;
    background: ${p => p.$tint ?? 'none'};
  }
  &::after {
    content: '';
    position: absolute;
    bottom: 1px;
    width: ${p => (p.$long ? 16 : 6)}px;
    height: 3px;
    border-radius: 2px;
    background: ${p => p.$mark ?? 'none'};
  }
  & > * { position: relative; }
`;
const Find = styled.label`
  width: 218px;
  height: 31px;
  margin: 0 3px 0 4px;
  padding: 0 10px;
  display: flex;
  align-items: center;
  gap: 10px;
  border-radius: 16px;
  background: #f7f8ec;
  border: 1px solid #e0e0cc;
`;
const FindInput = styled.input`
  flex: 1;
  min-width: 0;
  font-size: 13px;
  outline: 0;
  &::placeholder { color: #666; opacity: 1; }
`;
const Tile = styled.span<{ $bg: string; $fg: string; $edge?: string; $narrow?: boolean }>`
  width: ${p => (p.$narrow ? 20 : 22)}px;
  height: 22px;
  display: grid;
  place-items: center;
  border-radius: 4px;
  background: ${p => p.$bg};
  color: ${p => p.$fg};
  border: 1px solid ${p => p.$edge ?? p.$bg};
  font-weight: 500;
  line-height: 12px;
`;
const ProductTile = styled(Tile)`
  border-radius: 2px;
  grid-template-rows: 15px 7px;
  height: 24px;
  font-size: 13px;
  font-weight: 700;
`;
const Foot = styled.small`
  font-size: 6px;
  line-height: 7px;
`;
const Temp = styled.span`
  font-size: 11px;
  line-height: 14px;
  padding: 0 4px;
  border-radius: 7px;
  background: #fbfbf3;
  color: #222;
`;
const Weather = styled.span`
  display: grid;
  width: 36px;
  & > * { grid-area: 1 / 1; }
  & > svg { margin: 6px 0 0 7px; }
  & > ${Temp} { place-self: start; margin-left: 13px; }
`;
const Tray = styled.div`
  display: flex;
  align-items: center;
  color: #222;
`;
const Lang = styled.button`
  width: 50px;
  color: #222;
`;
const Clock = styled.button`
  width: 69px;
  text-align: right;
  margin-right: 7px;
  color: #222;
`;
const Bubble = styled.button`
  width: 16px;
  height: 16px;
  margin-right: 20px;
  border-radius: 8px;
  background: #12619f;
  color: #fff;
  font-size: 11px;
  line-height: 16px;
`;

const Svg24 = ({ children }: { children: ReactNode }) => (
  <svg width="24" height="24" viewBox="0 0 24 24" aria-hidden="true">{children}</svg>
);

const TaskbarView = () => (
  <Taskbar>
    <Launcher aria-label="Start">
      <Svg24>
        <defs><linearGradient id="win" x2="1" y2="1"><stop offset="0" stopColor="#3fc0ee" /><stop offset="1" stopColor="#0b6cbd" /></linearGradient></defs>
        <path d="M.5 .5H11V11H.5zM12.500 .5H23.500V11h-11zM.5 12.500H11v11H.5zM12.500 12.500h11v11h-11z" fill="url(#win)" />
      </Svg24>
    </Launcher>
    <Find><Ico n="lens" /><FindInput aria-label="Search" placeholder="Search" /></Find>
    <Launcher aria-label="Task view">
      <Svg24><path d="M7 2h16v16H7z" fill="#f7f7f7" /><path d="M1 7h16v15H1z" fill="#2a2a28" /><path d="M7 7h10v11H7z" fill="#a5a5a0" /></Svg24>
    </Launcher>
    <Launcher aria-label="Weather">
      <Weather>
        <Svg24><path d="M2 13q-1-5 4-5 2-5 7-3 4 1 4 4 6 0 6 4t-5 3H5q-3 0-3-3z" fill="#a9c8ef" stroke="#7fa6dd" /><path d="M16 10q5 6 3 9-3 3-6 0-1-3 3-9z" fill="#2b7fd6" /></Svg24>
        <Temp>71°</Temp>
      </Weather>
    </Launcher>
    <Launcher aria-label="Chat">
      <Svg24><path d="M12 1a11 11 0 1 1-6 20.500L1 23l1-6A11 11 0 0 1 12 1z" fill="#5558af" /><path d="M6 8h8v8H6zM15 11l4-3v8l-4-3z" fill="#fff" /></Svg24>
    </Launcher>
    <Launcher aria-label="Instagram">
      <Svg24>
        <defs><linearGradient id="insta" x1="0" y1="1" x2="1" y2="0"><stop offset="0" stopColor="#f9b13c" /><stop offset=".45" stopColor="#e23a5f" /><stop offset="1" stopColor="#7b35c4" /></linearGradient></defs>
        <rect width="24" height="24" rx="5" fill="url(#insta)" />
        <g fill="none" stroke="#fff" strokeWidth="1.800"><rect x="4.500" y="4.500" width="15" height="15" rx="4" /><circle cx="12" cy="12" r="3.700" /></g>
        <circle cx="16.500" cy="7.500" r="1" fill="#fff" />
      </Svg24>
    </Launcher>
    <Launcher aria-label="Resource monitor">
      <Svg24><path d="M.5 3.500h23v17H.5z" fill="#eaf3f9" stroke="#9aa9b5" /><path d="M2 19v-3l2-2 2 2 2-9 2 7 1 2 2-1 1-3 1-5 2 6 2 2 2 1v2z" fill="#7dbbe2" stroke="#4288bd" strokeWidth=".8" /></Svg24>
    </Launcher>
    <Launcher aria-label="Lightroom Classic"><Tile $bg="#06233c" $fg="#a6cdea">Lrc</Tile></Launcher>
    <Launcher aria-label="Edge">
      <Svg24>
        <defs><linearGradient id="edge" x2="1" y2="1"><stop offset="0" stopColor="#1f86d1" /><stop offset="1" stopColor="#0d57a6" /></linearGradient><linearGradient id="edge2"><stop offset="0" stopColor="#2bb3e0" /><stop offset="1" stopColor="#5fce62" /></linearGradient></defs>
        <path d="M0 12Q1 6 8 6q7 1 6 6-2 2-1 4 3 4 9 2-4 6-10 6Q0 23 0 12z" fill="url(#edge)" />
        <path d="M0 11Q2 0 12 0q11 1 12 10 0 6-6 6-5 0-3-3 1-5-5-6-7-1-10 4z" fill="url(#edge2)" />
      </Svg24>
    </Launcher>
    <Launcher $tint="#fae6e6" $mark="#b0403a" aria-label="Spotify">
      <Svg24><circle cx="12" cy="12" r="12" fill="#25c865" /><path d="M5 8.500q7-2 14 1.500M5.500 12.500q6-1.500 12 1.300M6 16q5-1.200 10 1" fill="none" stroke="#12251a" strokeWidth="2" strokeLinecap="round" /></Svg24>
    </Launcher>
    <Launcher $mark="#8d8782" aria-label="Opera">
      <Svg24><path d="M12 0a11 12 0 1 0 .1 0zM12 4q4.500 1 4.500 8T12 20q-4.500-1-4.500-8T12 4z" fill="#d8232e" fillRule="evenodd" /><path d="M16 2q4 4 4 10t-4 10q7-2 7-10T16 2z" fill="#9d1018" /></Svg24>
    </Launcher>
    <Launcher aria-label="Premiere"><Tile $bg="#2c0a46" $fg="#d79bf0" $edge="#b56ccf">Pr</Tile></Launcher>
    <Launcher aria-label="Google Earth Pro">
      <Svg24><circle cx="12" cy="11" r="11" fill="#9aa0a6" /><path d="M2 6q10-4 21 6M1 11q11-5 21 5M12 0q8 2 10 8" fill="none" stroke="#f1f3f4" strokeWidth="2.500" /><path d="M5 16h14v7H5z" fill="#333" /><Mark x="12" y="22" $px={7} $c="#eee">Pro</Mark></Svg24>
    </Launcher>
    <Launcher aria-label="Version 12">
      <Svg24><path d="M1 1h22v22H1z" fill="#3f6878" /><path d="M3 3q10 2 18 11M20 3q-6 3-7 7M4 13q4-1 7-5" fill="none" stroke="#fff" strokeWidth="1.800" /><Mark x="12" y="22" $px={9} $c="#fff">12</Mark></Svg24>
    </Launcher>
    <Launcher aria-label="Media player">
      <Svg24><path d="M4 3l18 1v18l-16 1z" fill="#93b5cb" stroke="#6e8fa6" /><path d="M2 4h15v17H2z" fill="#cfe0ea" stroke="#7f9cb0" /><circle cx="10" cy="12.500" r="6.500" fill="#e6892b" /><path d="M8 9l6 3.500L8 16z" fill="#fff" /></Svg24>
    </Launcher>
    <Launcher aria-label="After Effects"><Tile $bg="#06005c" $fg="#c3b7ff">Ae</Tile></Launcher>
    <Launcher aria-label="File explorer">
      <Svg24><path d="M0 2h9l2 3h13v17H0z" fill="#e0a21c" /><path d="M0 7h24v15H0z" fill="#fbcf52" /><path d="M4 22v-4q0-3 3-3h10q3 0 3 3v4z" fill="#2678b8" /></Svg24>
    </Launcher>
    <Launcher aria-label="Photoshop"><Tile $bg="#072430" $fg="#58c3ec" $edge="#2b8ca9">Ps</Tile></Launcher>
    <Launcher $tint="#f3f1ef" $mark="#2f6d98" $long aria-label="Revit"><Ico n="revit" px={24} /></Launcher>
    <Launcher aria-label="AutoCAD"><ProductTile $narrow $bg="#cf1541" $fg="#fff">A<Foot>CAD</Foot></ProductTile></Launcher>
    <Launcher aria-label="3ds Max"><ProductTile $narrow $bg="#2f93a8" $fg="#fff">3<Foot>MAX</Foot></ProductTile></Launcher>
    <Launcher $mark="#83858a" aria-label="Paint">
      <Svg24><path d="M12 1q11 0 11 9 0 5-6 5-3 0-3 3 0 5-4 5Q1 20 1 12 2 2 12 1z" fill="#35a6dd" /><circle cx="7" cy="8" r="2" fill="#f2e25f" /><circle cx="13" cy="5.500" r="2" fill="#7fd35b" /><circle cx="6" cy="14" r="2" fill="#1b4f97" /><path d="M20 4l2 9h-4zM18 13h4l-1 10h-2z" fill="#c07a44" /></Svg24>
    </Launcher>
    <Push />
    <Tray>
      <Tool $w={24} aria-label="Hidden icons"><Ico n="up" /></Tool>
      <Spacer $w={2} />
      <Lang>ENG</Lang>
      <Tool aria-label="Network"><Ico n="wifi" px={17} /></Tool>
      <Tool aria-label="Volume"><Ico n="volume" /></Tool>
      <Tool aria-label="Battery"><Ico n="battery" /></Tool>
      <Clock>6:47 PM<br />5/29/2023</Clock>
      <Bubble>1</Bubble>
    </Tray>
  </Taskbar>
);

export default function App() {
  return (
    <Window>
      <Global />
      <Bar>
        <Quick />
        <Title>Autodesk Revit 2020 - LAMP FAMILY BATCH.rvt - 3D View: {'{3D}'}</Title>
        <Info />
      </Bar>
      <TabRow>
        <Tab $kind="file">File</Tab>
        {tabs.map(t => <Tab key={t}>{t}</Tab>)}
        <Tab $kind="current">Modify</Tab>
        <TabToggle aria-label="Ribbon state">
          <svg width="15" height="9" viewBox="0 0 15 9"><rect x=".5" y=".5" width="14" height="8" rx="2" fill="#eef3f7" stroke="#444" /><path d="M5 6l2.500-3L10 6z" fill="#333" /></svg>
          <Caret c="#222" />
        </TabToggle>
      </TabRow>
      <RibbonView />
      <OptionsBar />
      <Workspace>
        <ProjectBrowser />
        <DrawingArea />
        <PropertiesPanel />
      </Workspace>
      <StatusBar />
      <TaskbarView />
    </Window>
  );
}
